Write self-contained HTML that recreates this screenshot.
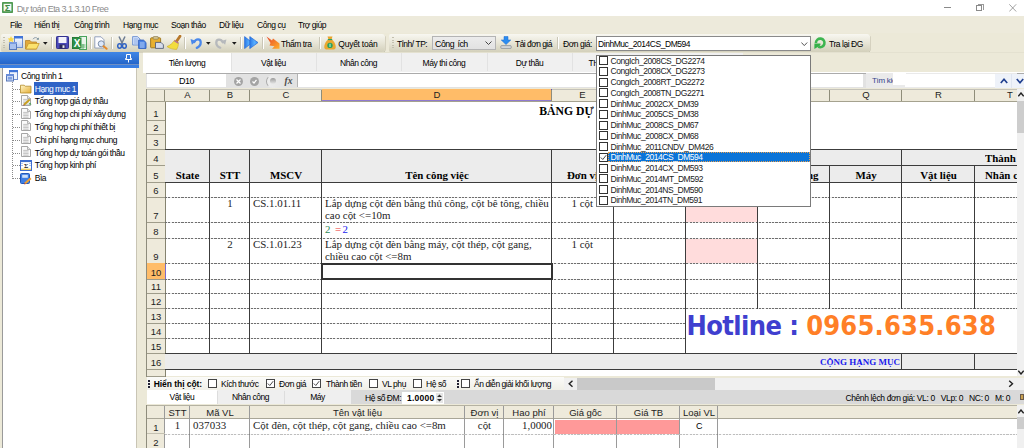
<!DOCTYPE html><html><head><meta charset="utf-8"><title>Dự toán Eta</title><style>
html,body{margin:0;padding:0;}
body{width:1024px;height:448px;overflow:hidden;position:relative;background:#ece9d8;font-family:"Liberation Sans",sans-serif;font-size:8px;color:#000;}
div,span{box-sizing:border-box;}
.a{position:absolute;}
.t{position:absolute;white-space:nowrap;font-size:8.5px;letter-spacing:-0.45px;line-height:10px;}
.s{position:absolute;white-space:nowrap;font-family:"Liberation Serif",serif;font-size:10.9px;line-height:12px;}
.sb{font-weight:bold;}
.ch{position:absolute;text-align:center;font-size:9.5px;line-height:12px;color:#222;}
.rh{position:absolute;text-align:center;font-size:9.5px;color:#222;left:147px;width:18px;}
.vl{position:absolute;width:1px;background:#3c3c3c;}
.hl{position:absolute;height:1px;background:#3c3c3c;}
.dl{position:absolute;height:1px;background:repeating-linear-gradient(90deg,#6e6e6e 0,#6e6e6e 2.1px,#e8e8e8 2.1px,#e8e8e8 3.3px);}
.cb{position:absolute;width:9px;height:9px;border:1px solid #333;background:#fff;}
</style></head><body>
<div class="a" style="left:0;top:0;width:1024px;height:16px;background:#fff"></div>
<svg class="a" style="left:1.8px;top:2.3px" width="11" height="11" viewBox="0 0 11 11"><rect x="0" y="0" width="11" height="11" rx="0.8" fill="#4f9a52"/><path d="M1.6 1.8H9.4V9.2H1.6Z" fill="#f4faf4"/><text x="5.5" y="8.9" font-size="9.5" font-weight="bold" text-anchor="middle" font-family="Liberation Sans,sans-serif" fill="#3f8a45">Σ</text></svg>
<div class="t" style="left:16.8px;top:3.6px;font-size:9.1px;letter-spacing:-0.57px;color:#8c8c8c">Dự toán Eta 3.1.3.10 Free</div>
<div class="a" style="left:944px;top:7px;width:7px;height:1px;background:#8a8a8a"></div>
<div class="a" style="left:976px;top:5px;width:6px;height:6px;border:1px solid #8a8a8a;background:#fff"></div>
<div class="a" style="left:977.5px;top:3.5px;width:6px;height:6px;border-top:1px solid #999;border-right:1px solid #999"></div>
<svg class="a" style="left:1009px;top:3.5px" width="8" height="8"><path d="M0.3 0.3L7.2 7.5M7.2 0.3L0.3 7.5" stroke="#8a8a8a" stroke-width="0.8" fill="none"/></svg>
<div class="a" style="left:0;top:16px;width:1024px;height:17px;background:#edeadb"></div>
<div class="t" style="left:10px;top:20px">File</div>
<div class="t" style="left:34px;top:20px">Hiển thị</div>
<div class="t" style="left:74px;top:20px">Công trình</div>
<div class="t" style="left:123px;top:20px">Hạng mục</div>
<div class="t" style="left:171px;top:20px">Soạn thảo</div>
<div class="t" style="left:219px;top:20px">Dữ liệu</div>
<div class="t" style="left:257px;top:20px">Công cụ</div>
<div class="t" style="left:298px;top:20px">Trợ giúp</div>
<div class="a" style="left:0;top:33px;width:1024px;height:19px;background:#ece9d8"></div>
<div class="a" style="left:1px;top:34px;width:384px;height:18px;border-radius:2px 3px 3px 2px;background:linear-gradient(#f8f7f1,#e9e7d9 45%,#d3d0bb);box-shadow:0.5px 0.5px 0 #bdbaa6"></div>
<div class="a" style="left:389px;top:34px;width:481px;height:18px;border-radius:2px 3px 3px 2px;background:linear-gradient(#f8f7f1,#e9e7d9 45%,#d3d0bb);box-shadow:0.5px 0.5px 0 #bdbaa6"></div>
<div class="a" style="left:3px;top:37px;width:2px;height:11px;background:repeating-linear-gradient(#c2bfae 0,#c2bfae 1.2px,transparent 1.2px,transparent 2.6px)"></div>
<div class="a" style="left:392px;top:37px;width:2px;height:11px;background:repeating-linear-gradient(#c2bfae 0,#c2bfae 1.2px,transparent 1.2px,transparent 2.6px)"></div>
<svg class="a" style="left:8px;top:36px" width="15" height="14" viewBox="0 0 15 14"><defs><linearGradient id="gw" x1="0" y1="0" x2="0" y2="1"><stop offset="0" stop-color="#fff"/><stop offset="1" stop-color="#b9cdf2"/></linearGradient></defs><rect x="6.5" y="0.5" width="8" height="11" fill="url(#gw)" stroke="#6f8fd0"/><rect x="6" y="0" width="9" height="2.5" fill="#3f74d8"/><rect x="1.5" y="6.5" width="7" height="7" fill="#a9c2f0" stroke="#5878b8"/><rect x="1" y="6" width="8" height="2" fill="#7a9ce0"/><path d="M3 0L4 2.3L6.5 2.5L4.6 4L5.2 6.5L3 5.1L0.8 6.5L1.4 4L-0.5 2.5L2 2.3Z" fill="#f8d848"/></svg>
<svg class="a" style="left:25px;top:36px" width="15" height="14" viewBox="0 0 15 14"><path d="M0.5 13V4.5H5L6.5 6H11.5V13Z" fill="#e2a93c" stroke="#b98528" stroke-width="0.8"/><path d="M0.8 13L3.5 7.5H14.2L11.5 13Z" fill="#fbe26e" stroke="#c8992c" stroke-width="0.8"/><path d="M8 3.2C9 1.2 11.5 1 12.8 2.8" stroke="#8a9aa8" stroke-width="0.9" fill="none"/><path d="M11.5 3.6L13.8 3.8L13.6 1.6Z" fill="#5a7a8a"/></svg>
<svg class="a" style="left:43.3px;top:42px" width="4.6" height="2.8" viewBox="0 0 5 3"><path d="M0 0H5L2.5 3Z" fill="#1a1a1a"/></svg>
<div class="a" style="left:51px;top:37px;width:1px;height:12px;background:#c9c6b6"></div><div class="a" style="left:52px;top:37px;width:1px;height:12px;background:#fff"></div>
<svg class="a" style="left:56px;top:36px" width="13" height="13" viewBox="0 0 13 13"><rect x="0.5" y="0.5" width="12" height="12" rx="0.8" fill="#4a49b9" stroke="#33328f"/><rect x="2.5" y="1" width="8" height="6" fill="#f2f2fa"/><rect x="3.5" y="8.5" width="6" height="4" fill="#2a2a5a"/><rect x="6.5" y="9.3" width="2" height="2.6" fill="#e8e8f0"/></svg>
<svg class="a" style="left:72px;top:36px" width="15" height="14" viewBox="0 0 15 14"><rect x="0.5" y="1.5" width="10" height="11" fill="#2f8f45" stroke="#1f6a30"/><rect x="7.5" y="0.5" width="7" height="13" fill="#e9f5ea" stroke="#4aa35c"/><rect x="0.5" y="1.5" width="9" height="11" fill="#2f8f45"/><text x="5" y="10.6" font-size="10" font-weight="bold" text-anchor="middle" font-family="Liberation Sans,sans-serif" fill="#fff">X</text><path d="M8.5 9H13.5M8.5 11H13.5M11 8V13" stroke="#4aa35c" stroke-width="0.8"/></svg>
<div class="a" style="left:90px;top:37px;width:1px;height:12px;background:#c9c6b6"></div><div class="a" style="left:91px;top:37px;width:1px;height:12px;background:#fff"></div>
<svg class="a" style="left:94px;top:36px" width="14" height="14" viewBox="0 0 14 14"><path d="M0.8 0.8H7L10 3.8V12H0.8Z" fill="#fdfdff" stroke="#8b9bb8" stroke-width="0.9"/><circle cx="7.2" cy="7.8" r="3" fill="#dbe8fb" stroke="#7d8ea8" stroke-width="1"/><path d="M9.6 10.2L12.6 12.8" stroke="#e58a2a" stroke-width="2" stroke-linecap="round"/></svg>
<div class="a" style="left:111px;top:37px;width:1px;height:12px;background:#c9c6b6"></div><div class="a" style="left:112px;top:37px;width:1px;height:12px;background:#fff"></div>
<svg class="a" style="left:117px;top:36px" width="10" height="13" viewBox="0 0 10 13"><path d="M2 0.5L5.6 8M8 0.5L4.4 8" stroke="#6d7c93" stroke-width="1.5" fill="none"/><ellipse cx="2.6" cy="10" rx="1.9" ry="2.2" fill="none" stroke="#2f62c4" stroke-width="1.5"/><ellipse cx="7.4" cy="10" rx="1.9" ry="2.2" fill="none" stroke="#2f62c4" stroke-width="1.5"/></svg>
<svg class="a" style="left:132px;top:36px" width="15" height="13" viewBox="0 0 15 13"><path d="M0.6 0.6H5.5L8 3V9H0.6Z" fill="#cfe0fa" stroke="#6d8fd0" stroke-width="0.9"/><path d="M2 3H6M2 5H6M2 7H6" stroke="#7ea0e0" stroke-width="0.8"/><path d="M6.6 4.1H11.5L14 6.5V12.4H6.6Z" fill="#4f86e4" stroke="#2f5fc0" stroke-width="0.9"/><path d="M8 7H12.5M8 9H12.5M8 11H12.5" stroke="#cfe0fa" stroke-width="0.8"/></svg>
<svg class="a" style="left:150px;top:36px" width="14" height="13" viewBox="0 0 14 13"><rect x="0.6" y="1.8" width="10" height="10" rx="0.8" fill="#e8b030" stroke="#9a7420" stroke-width="0.9"/><rect x="3.2" y="0.6" width="5" height="2.6" rx="0.6" fill="#d8c890" stroke="#8a7a50" stroke-width="0.7"/><path d="M5.5 6.4H11L13.4 8.8V12.4H5.5Z" fill="#d5dcec" stroke="#55607a" stroke-width="0.9"/></svg>
<svg class="a" style="left:166px;top:35px" width="16" height="15" viewBox="0 0 16 15"><path d="M14 1.2L10.6 6.2" stroke="#b8792c" stroke-width="2.8" stroke-linecap="round"/><path d="M8.6 5.2L12.4 7.8C12.6 10 11.8 12.6 10.6 14.4C7.5 14.6 3.6 13.4 1 11.6C4 10.4 6.8 8 8.6 5.2Z" fill="#f2dc3e" stroke="#cfae22" stroke-width="0.6"/><path d="M8.4 5.6L12.4 8.2" stroke="#b0689a" stroke-width="1.3"/></svg>
<div class="a" style="left:184px;top:37px;width:1px;height:12px;background:#c9c6b6"></div><div class="a" style="left:185px;top:37px;width:1px;height:12px;background:#fff"></div>
<svg class="a" style="left:189.5px;top:36.5px" width="12" height="12" viewBox="0 0 13 13"><path d="M4.6 5.6C6.2 1.6 11.6 1.4 11.6 6C11.6 8.8 9.6 10.8 7.4 11.8" stroke="#4a88ea" stroke-width="2.5" fill="none" stroke-linecap="round"/><path d="M0.6 2.3L6.6 4.2L2 8.3Z" fill="#4a88ea"/></svg>
<svg class="a" style="left:206.3px;top:42px" width="4.6" height="2.8" viewBox="0 0 5 3"><path d="M0 0H5L2.5 3Z" fill="#1a1a1a"/></svg>
<svg class="a" style="left:214.5px;top:36.5px" width="12" height="12" viewBox="0 0 13 13"><g transform="translate(13,0.4) scale(-1,0.95)"><path d="M4.6 5.6C6.2 1.6 11.6 1.4 11.6 6C11.6 8.8 9.6 10.8 7.4 11.8" stroke="#b6b9bc" stroke-width="2.5" fill="none" stroke-linecap="round"/><path d="M0.6 2.3L6.6 4.2L2 8.3Z" fill="#b6b9bc"/></g></svg>
<svg class="a" style="left:232.3px;top:42px" width="4.6" height="2.8" viewBox="0 0 5 3"><path d="M0 0H5L2.5 3Z" fill="#1a1a1a"/></svg>
<div class="a" style="left:240px;top:37px;width:1px;height:12px;background:#c9c6b6"></div><div class="a" style="left:241px;top:37px;width:1px;height:12px;background:#fff"></div>
<svg class="a" style="left:244px;top:36px" width="15" height="13" viewBox="0 0 15 13"><defs><linearGradient id="gb" x1="0" y1="0" x2="1" y2="0"><stop offset="0" stop-color="#2a78e6"/><stop offset="0.6" stop-color="#58b0ff"/><stop offset="1" stop-color="#2f86f0"/></linearGradient></defs><path d="M0.6 0.6L8 6.6L0.6 12.6Z" fill="url(#gb)" stroke="#2468d8" stroke-width="0.7"/><path d="M5.8 0.6L14 6.6L5.8 12.6Z" fill="url(#gb)" stroke="#2468d8" stroke-width="0.7"/></svg>
<div class="a" style="left:262px;top:37px;width:1px;height:12px;background:#c9c6b6"></div><div class="a" style="left:263px;top:37px;width:1px;height:12px;background:#fff"></div>
<svg class="a" style="left:266px;top:36px" width="14" height="13" viewBox="0 0 14 13"><defs><linearGradient id="go" x1="0" y1="0" x2="1" y2="1"><stop offset="0" stop-color="#e8442a"/><stop offset="1" stop-color="#ffb02a"/></linearGradient></defs><path d="M0.5 0.5L6 4.5L7 2.5L13.5 7.5V12.8H6L8.5 10.2L3.5 9.5L4.5 7Z" fill="url(#go)"/></svg>
<div class="a" style="left:319px;top:37px;width:1px;height:12px;background:#c9c6b6"></div><div class="a" style="left:320px;top:37px;width:1px;height:12px;background:#fff"></div>
<svg class="a" style="left:323px;top:36px" width="14" height="14" viewBox="0 0 14 14"><path d="M4.5 0.5H9.5L8.6 3.2H5.4Z" fill="#e9a52c"/><path d="M5.2 3.6C1 6.5 0 13.5 3 13.5H11C14 13.5 13 6.5 8.8 3.6Z" fill="#eaa830"/><rect x="4.8" y="3" width="4.4" height="1.1" fill="#2f9f5c"/><circle cx="7" cy="9.4" r="2.7" fill="#2aa060"/><path d="M7 7.8V11" stroke="#d8ffe8" stroke-width="0.9"/></svg>
<svg class="a" style="left:500px;top:36px" width="12" height="13" viewBox="0 0 12 13"><path d="M4 0.5H8V4H10.8L6 8.6L1.2 4H4Z" fill="#2b8cf0" stroke="#1a6ad0" stroke-width="0.5"/><rect x="0.8" y="9.6" width="10.4" height="3" rx="0.8" fill="#d0d4d8" stroke="#8a9098" stroke-width="0.8"/></svg>
<div class="a" style="left:557px;top:37px;width:1px;height:12px;background:#c9c6b6"></div><div class="a" style="left:558px;top:37px;width:1px;height:12px;background:#fff"></div>
<svg class="a" style="left:813px;top:36px" width="14" height="14" viewBox="0 0 14 14"><path d="M2.9 6.9A4.3 4.3 0 1 1 5.2 10.7" fill="none" stroke="#3db550" stroke-width="2.6"/><path d="M1.4 7.6H7.4V9.2L1.4 12.9Z" fill="#35b048"/></svg>
<div class="t" style="left:281px;top:38.5px">Thẩm tra</div>
<div class="t" style="left:338.3px;top:38.5px;letter-spacing:-0.25px">Quyết toán</div>
<div class="t" style="left:397px;top:38.5px">Tỉnh/ TP:</div>
<div class="a" style="left:432px;top:36px;width:64px;height:14px;background:linear-gradient(#ececec,#e2e2e2);border:1px solid #b4b4b4"></div>
<div class="t" style="left:435px;top:38.8px;font-size:8.8px;word-spacing:1.2px">Công ích</div>
<svg class="a" style="left:485px;top:41px" width="7" height="5"><path d="M0.5 0.5L3.5 3.5L6.5 0.5" stroke="#444" stroke-width="1" fill="none"/></svg>
<div class="t" style="left:515px;top:38.5px;letter-spacing:-0.55px">Tải đơn giá</div>
<div class="t" style="left:563px;top:38.5px">Đơn giá:</div>
<div class="a" style="left:596px;top:36px;width:215px;height:15px;background:#fff;border:1px solid #8a8a8a"></div>
<div class="t" style="left:598px;top:38.5px">DinhMuc_2014CS_DM594</div>
<svg class="a" style="left:801px;top:41.5px" width="7" height="5"><path d="M0.4 0.5L3.3 3.6L6.2 0.5" stroke="#555" stroke-width="1" fill="none"/></svg>
<div class="t" style="left:829px;top:38.5px">Tra lại ĐG</div>
<div class="a" style="left:0;top:52px;width:139px;height:396px;background:#ece9d8"></div>
<div class="a" style="left:0;top:52px;width:139px;height:12px;background:linear-gradient(#3f86e6,#2566c9)"></div>
<div class="a" style="left:0;top:64px;width:139px;height:4px;background:#3a7fe2"></div><div class="a" style="left:0;top:63.8px;width:139px;height:1px;background:#6f8fc4"></div>
<div class="a" style="left:2px;top:68px;width:135px;height:380px;background:#fff;border-right:1px solid #c9c5b5;border-left:1px solid #9a9a9a"></div>
<svg class="a" style="left:125px;top:54px" width="7" height="9"><path d="M1.5 0.5H5.5V4.5H6.5V5.5H0.5V4.5H1.5Z M3.5 5.5V8.5" stroke="#fff" stroke-width="1" fill="none"/></svg>
<div class="a" style="left:12px;top:82px;width:1px;height:98px;background:repeating-linear-gradient(#8a8a8a 0,#8a8a8a 1px,#fff 1px,#fff 2px)"></div>
<svg class="a" style="left:6px;top:70px" width="12" height="12" viewBox="0 0 12 12"><rect x="3.5" y="0.5" width="8" height="9" fill="#eef3fc" stroke="#6f8fd0"/><rect x="3" y="0" width="9" height="2.2" fill="#3f74d8"/><rect x="0.5" y="4.5" width="7" height="6.5" fill="#c6d6f4" stroke="#5878b8"/><rect x="0" y="4" width="8" height="2" fill="#6a8ed8"/><rect x="2" y="7" width="4" height="2.5" fill="#7fa0e0"/></svg>
<div class="t" style="left:21px;top:70.5px">Công trình 1</div>
<div class="a" style="left:13px;top:88.5px;width:7px;height:1px;background:repeating-linear-gradient(90deg,#8a8a8a 0,#8a8a8a 1px,#fff 1px,#fff 2px)"></div>
<div class="a" style="left:34px;top:82.0px;width:44px;height:13px;background:#2f63c6"></div>
<div class="t" style="left:34.7px;top:83.5px;color:#fff">Hạng mục 1</div>
<svg class="a" style="left:20px;top:83.5px" width="12" height="10" viewBox="0 0 12 10"><defs><linearGradient id="gf" x1="0" y1="0" x2="1" y2="1"><stop offset="0" stop-color="#fff6c8"/><stop offset="1" stop-color="#e4ae38"/></linearGradient></defs><path d="M0.5 9V1.2H4.2L5.2 2.2H11V9Z" fill="url(#gf)" stroke="#b48c2a" stroke-width="0.8"/></svg>
<div class="a" style="left:13px;top:101.3px;width:7px;height:1px;background:repeating-linear-gradient(90deg,#8a8a8a 0,#8a8a8a 1px,#fff 1px,#fff 2px)"></div>
<div class="t" style="left:34.7px;top:96.3px">Tổng hợp giá dự thầu</div>
<svg class="a" style="left:21px;top:94.8px" width="11" height="12" viewBox="0 0 11 12"><path d="M0.5 0.5H6.5L9.5 3.5V10.5H0.5Z" fill="#fafafa" stroke="#9c9c9c" stroke-width="0.9"/><path d="M6.5 0.5V3.5H9.5" fill="#e4e4e4" stroke="#9c9c9c" stroke-width="0.7"/><path d="M2.2 4.4H7.6M2.2 6H7.6M2.2 7.6H7.6M2.2 9.2H7.6" stroke="#b4b4b4" stroke-width="0.8"/><path d="M3 9.8L8.8 4.6" stroke="#c8a020" stroke-width="2"/><path d="M7.5 9.5L10.5 9.5L9 7.5Z" fill="#3f9f4f"/><path d="M2.2 10.8L3.8 10.3L2.8 9.2Z" fill="#a04040"/></svg>
<div class="a" style="left:13px;top:114.1px;width:7px;height:1px;background:repeating-linear-gradient(90deg,#8a8a8a 0,#8a8a8a 1px,#fff 1px,#fff 2px)"></div>
<div class="t" style="left:34.7px;top:109.1px">Tổng hợp chi phí xây dựng</div>
<svg class="a" style="left:21px;top:107.6px" width="10" height="11" viewBox="0 0 10 11"><path d="M0.5 0.5H6.5L9.5 3.5V10.5H0.5Z" fill="#fafafa" stroke="#9c9c9c" stroke-width="0.9"/><path d="M6.5 0.5V3.5H9.5" fill="#e4e4e4" stroke="#9c9c9c" stroke-width="0.7"/><path d="M2.2 4.4H7.6M2.2 6H7.6M2.2 7.6H7.6M2.2 9.2H7.6" stroke="#b4b4b4" stroke-width="0.8"/></svg>
<div class="a" style="left:13px;top:126.9px;width:7px;height:1px;background:repeating-linear-gradient(90deg,#8a8a8a 0,#8a8a8a 1px,#fff 1px,#fff 2px)"></div>
<div class="t" style="left:34.7px;top:121.9px">Tổng hợp chi phí thiết bị</div>
<svg class="a" style="left:21px;top:120.4px" width="10" height="11" viewBox="0 0 10 11"><path d="M0.5 0.5H6.5L9.5 3.5V10.5H0.5Z" fill="#fafafa" stroke="#9c9c9c" stroke-width="0.9"/><path d="M6.5 0.5V3.5H9.5" fill="#e4e4e4" stroke="#9c9c9c" stroke-width="0.7"/><path d="M2.2 4.4H7.6M2.2 6H7.6M2.2 7.6H7.6M2.2 9.2H7.6" stroke="#b4b4b4" stroke-width="0.8"/></svg>
<div class="a" style="left:13px;top:139.7px;width:7px;height:1px;background:repeating-linear-gradient(90deg,#8a8a8a 0,#8a8a8a 1px,#fff 1px,#fff 2px)"></div>
<div class="t" style="left:34.7px;top:134.7px">Chi phí hạng mục chung</div>
<svg class="a" style="left:21px;top:133.2px" width="10" height="11" viewBox="0 0 10 11"><path d="M0.5 0.5H6.5L9.5 3.5V10.5H0.5Z" fill="#fafafa" stroke="#9c9c9c" stroke-width="0.9"/><path d="M6.5 0.5V3.5H9.5" fill="#e4e4e4" stroke="#9c9c9c" stroke-width="0.7"/><path d="M2.2 4.4H7.6M2.2 6H7.6M2.2 7.6H7.6M2.2 9.2H7.6" stroke="#b4b4b4" stroke-width="0.8"/></svg>
<div class="a" style="left:13px;top:152.5px;width:7px;height:1px;background:repeating-linear-gradient(90deg,#8a8a8a 0,#8a8a8a 1px,#fff 1px,#fff 2px)"></div>
<div class="t" style="left:34.7px;top:147.5px">Tổng hợp dự toán gói thầu</div>
<svg class="a" style="left:21px;top:146.0px" width="10" height="11" viewBox="0 0 10 11"><path d="M0.5 0.5H6.5L9.5 3.5V10.5H0.5Z" fill="#fafafa" stroke="#9c9c9c" stroke-width="0.9"/><path d="M6.5 0.5V3.5H9.5" fill="#e4e4e4" stroke="#9c9c9c" stroke-width="0.7"/><path d="M2.2 4.4H7.6M2.2 6H7.6M2.2 7.6H7.6M2.2 9.2H7.6" stroke="#b4b4b4" stroke-width="0.8"/></svg>
<div class="a" style="left:13px;top:165.3px;width:7px;height:1px;background:repeating-linear-gradient(90deg,#8a8a8a 0,#8a8a8a 1px,#fff 1px,#fff 2px)"></div>
<div class="t" style="left:34.7px;top:160.3px">Tổng hợp kinh phí</div>
<svg class="a" style="left:20px;top:159.8px" width="12" height="11" viewBox="0 0 12 11"><rect x="0.5" y="0.5" width="11" height="10" fill="#fff" stroke="#3f6fd0"/><rect x="0.5" y="0.5" width="11" height="1.6" fill="#3f6fd0"/><rect x="1" y="8.6" width="10" height="1.4" fill="#f0d060"/><path d="M1 3.5H3M1 5.5H3M9 3.5H11M9 5.5H11" stroke="#9ab4e8" stroke-width="0.8"/><text x="6" y="7.6" font-size="6.5" font-weight="bold" text-anchor="middle" font-family="Liberation Serif,serif" fill="#222">Σ</text></svg>
<div class="a" style="left:13px;top:178.10000000000002px;width:7px;height:1px;background:repeating-linear-gradient(90deg,#8a8a8a 0,#8a8a8a 1px,#fff 1px,#fff 2px)"></div>
<div class="t" style="left:34.7px;top:173.10000000000002px">Bìa</div>
<svg class="a" style="left:20px;top:172.60000000000002px" width="12" height="12" viewBox="0 0 12 12"><rect x="0.5" y="0.5" width="9" height="10" rx="1" fill="#3f7fe4" stroke="#2458b8"/><rect x="2.2" y="1.8" width="5.6" height="3" fill="#cfe0fa"/><path d="M5 10.5L10.8 5.2" stroke="#f0a030" stroke-width="2"/><path d="M4.2 11.4L5.8 10.9L4.7 9.8Z" fill="#c04040"/></svg>
<div class="a" style="left:143px;top:52px;width:881px;height:1px;background:#e4e1d0"></div><div class="a" style="left:143px;top:53px;width:600px;height:18.5px;background:#f0f0f0"></div><div class="a" style="left:146px;top:71.5px;width:878px;height:2px;background:#fff"></div>
<div class="a" style="left:143px;top:53px;width:88px;height:20px;background:#fff"></div>
<div class="t" style="left:143px;width:88px;top:57.8px;text-align:center">Tiên lượng</div>
<div class="t" style="left:231px;width:85px;top:57.8px;text-align:center">Vật liệu</div>
<div class="a" style="left:231px;top:53px;width:1px;height:18px;background:#e2e2e2"></div>
<div class="t" style="left:316px;width:85px;top:57.8px;text-align:center">Nhân công</div>
<div class="a" style="left:316px;top:53px;width:1px;height:18px;background:#e2e2e2"></div>
<div class="t" style="left:401px;width:86px;top:57.8px;text-align:center">Máy thi công</div>
<div class="a" style="left:401px;top:53px;width:1px;height:18px;background:#e2e2e2"></div>
<div class="t" style="left:487px;width:85px;top:57.8px;text-align:center">Dự thầu</div>
<div class="a" style="left:487px;top:53px;width:1px;height:18px;background:#e2e2e2"></div>
<div class="t" style="left:588.5px;top:57.8px">TH dự thầu</div>
<div class="a" style="left:572px;top:53px;width:1px;height:18px;background:#e2e2e2"></div>
<div class="a" style="left:146px;top:73px;width:878px;height:15px;background:#e2e2e2;border-top:1px solid #ababab"></div>
<div class="a" style="left:147px;top:74px;width:79px;height:13.3px;background:#fff"></div>
<div class="t" style="left:147px;width:79px;top:76px;text-align:center;font-size:9px">D10</div>
<div class="a" style="left:233.5px;top:76.5px;width:9px;height:9px;border-radius:4.5px;background:#a4a4a4"></div>
<div class="a" style="left:250px;top:76.5px;width:9px;height:9px;border-radius:4.5px;background:#a4a4a4"></div>
<svg class="a" style="left:235.5px;top:78.5px" width="5" height="5"><path d="M0.5 0.5L4.5 4.5M4.5 0.5L0.5 4.5" stroke="#fff" stroke-width="1.2"/></svg>
<svg class="a" style="left:252px;top:78.5px" width="5" height="5"><path d="M0.5 2.5L2 4L4.5 0.8" stroke="#fff" stroke-width="1.2" fill="none"/></svg>
<div class="a" style="left:266px;top:74.5px;width:22px;height:13px;border-radius:6.5px 0 0 6.5px;border:1px solid #a8a8a8;border-right:none;border-top-color:transparent;border-bottom-color:transparent;background:linear-gradient(90deg,#ededed,#e2e2e2)"></div>
<div class="a" style="left:270px;top:78px;width:6px;height:6px;border-radius:3px;background:linear-gradient(#9a9a9a,#e8e8e8)"></div>
<div class="s" style="left:284.5px;top:74.5px;font-style:italic;font-weight:bold;font-size:9.5px;color:#4a4a4a">fx</div>
<div class="a" style="left:297px;top:74px;width:566px;height:13.3px;background:#fff;border-left:1px solid #b4b4b4"></div>
<div class="a" style="left:866px;top:73px;width:151px;height:15px;background:#eaeaea"></div>
<div class="t" style="left:872px;top:76px;font-size:8px;letter-spacing:-0.3px;color:#34448a">Tìm kiếm</div>
<div class="a" style="left:893px;top:72.5px;width:13px;height:12px;background:#fff"></div><div class="a" style="left:905px;top:74px;width:90px;height:13px;background:#fff"></div>
<div class="a" style="left:995px;top:74px;width:29px;height:14px;background:#eef2f9"></div><div class="a" style="left:1011px;top:74px;width:1px;height:14px;background:#dfe5f0"></div>
<svg class="a" style="left:999.5px;top:77.5px" width="8" height="6"><path d="M0.8 5L4 1.3L7.2 5" stroke="#1f3f8f" stroke-width="1.7" fill="none"/></svg>
<svg class="a" style="left:1015.5px;top:77.5px" width="8" height="6"><path d="M0.8 1L4 4.7L7.2 1" stroke="#1f3f8f" stroke-width="1.7" fill="none"/></svg>
<div class="a" style="left:147px;top:89px;width:870px;height:287px;background:#fff"></div>
<div class="a" style="left:147px;top:89px;width:870px;height:13px;background:#eeeadb;border-bottom:1px solid #a5a28f;border-top:1px solid #c4c2b8"></div>
<div class="a" style="left:322px;top:89px;width:230px;height:12px;background:#ffbc68;border-bottom:1px solid #8f7ad0;border-right:1px solid #5a50c0"></div>
<div class="a" style="left:164px;top:90px;width:1px;height:11px;background:#8f8d7a"></div>
<div class="ch" style="left:165px;width:45px;top:89.2px">A</div>
<div class="a" style="left:209px;top:90px;width:1px;height:11px;background:#8f8d7a"></div>
<div class="ch" style="left:210px;width:40px;top:89.2px">B</div>
<div class="a" style="left:249px;top:90px;width:1px;height:11px;background:#8f8d7a"></div>
<div class="ch" style="left:250px;width:72px;top:89.2px">C</div>
<div class="a" style="left:321px;top:90px;width:1px;height:11px;background:#8f8d7a"></div>
<div class="ch" style="left:322px;width:230px;top:89.2px">D</div>
<div class="a" style="left:551px;top:90px;width:1px;height:11px;background:#8f8d7a"></div>
<div class="ch" style="left:552px;width:61px;top:89.2px">E</div>
<div class="a" style="left:612px;top:90px;width:1px;height:11px;background:#8f8d7a"></div>
<div class="ch" style="left:613px;width:72px;top:89.2px">F</div>
<div class="a" style="left:684px;top:90px;width:1px;height:11px;background:#8f8d7a"></div>
<div class="ch" style="left:685px;width:72px;top:89.2px">G</div>
<div class="a" style="left:756px;top:90px;width:1px;height:11px;background:#8f8d7a"></div>
<div class="ch" style="left:757px;width:73px;top:89.2px">H</div>
<div class="a" style="left:829px;top:90px;width:1px;height:11px;background:#8f8d7a"></div>
<div class="ch" style="left:830px;width:72px;top:89.2px">Q</div>
<div class="a" style="left:901px;top:90px;width:1px;height:11px;background:#8f8d7a"></div>
<div class="ch" style="left:902px;width:73px;top:89.2px">R</div>
<div class="a" style="left:974px;top:90px;width:1px;height:11px;background:#8f8d7a"></div>
<div class="ch" style="left:975px;width:70px;top:89.2px">T</div>
<div class="a" style="left:1017px;top:90px;width:1px;height:11px;background:#8f8d7a"></div>
<div class="a" style="left:147px;top:102px;width:19px;height:275px;background:#eeeadb;border-right:1px solid #85836f"></div>
<div class="a" style="left:146px;top:89px;width:1px;height:288px;background:#8e8c7c"></div>
<div class="a" style="left:147px;top:120px;width:18px;height:1px;background:#9f9c8a"></div>
<div class="rh" style="top:108px;line-height:11px">1</div>
<div class="a" style="left:147px;top:134px;width:18px;height:1px;background:#9f9c8a"></div>
<div class="rh" style="top:122px;line-height:11px">2</div>
<div class="a" style="left:147px;top:149px;width:18px;height:1px;background:#9f9c8a"></div>
<div class="rh" style="top:137px;line-height:11px">3</div>
<div class="a" style="left:147px;top:165px;width:18px;height:1px;background:#9f9c8a"></div>
<div class="rh" style="top:153px;line-height:11px">4</div>
<div class="a" style="left:147px;top:182px;width:18px;height:1px;background:#9f9c8a"></div>
<div class="rh" style="top:170px;line-height:11px">5</div>
<div class="a" style="left:147px;top:197px;width:18px;height:1px;background:#9f9c8a"></div>
<div class="rh" style="top:185px;line-height:11px">6</div>
<div class="a" style="left:147px;top:222px;width:18px;height:1px;background:#9f9c8a"></div>
<div class="rh" style="top:210px;line-height:11px">7</div>
<div class="a" style="left:147px;top:238px;width:18px;height:1px;background:#9f9c8a"></div>
<div class="rh" style="top:226px;line-height:11px">8</div>
<div class="a" style="left:147px;top:263px;width:18px;height:1px;background:#9f9c8a"></div>
<div class="rh" style="top:251px;line-height:11px">9</div>
<div class="a" style="left:147px;top:263px;width:19px;height:16px;background:#ffbc68;border-right:1px solid #7a6ad0"></div>
<div class="a" style="left:147px;top:279px;width:18px;height:1px;background:#9f9c8a"></div>
<div class="rh" style="top:267px;line-height:11px">10</div>
<div class="a" style="left:147px;top:293px;width:18px;height:1px;background:#9f9c8a"></div>
<div class="rh" style="top:281px;line-height:11px">11</div>
<div class="a" style="left:147px;top:308px;width:18px;height:1px;background:#9f9c8a"></div>
<div class="rh" style="top:296px;line-height:11px">12</div>
<div class="a" style="left:147px;top:323px;width:18px;height:1px;background:#9f9c8a"></div>
<div class="rh" style="top:311px;line-height:11px">13</div>
<div class="a" style="left:147px;top:338px;width:18px;height:1px;background:#9f9c8a"></div>
<div class="rh" style="top:326px;line-height:11px">14</div>
<div class="a" style="left:147px;top:353px;width:18px;height:1px;background:#9f9c8a"></div>
<div class="rh" style="top:341px;line-height:11px">15</div>
<div class="a" style="left:147px;top:369px;width:18px;height:1px;background:#9f9c8a"></div>
<div class="rh" style="top:357px;line-height:11px">16</div>
<div class="a" style="left:147px;top:376px;width:18px;height:1px;background:#9f9c8a"></div>
<div class="a" style="left:165px;top:149px;width:852px;height:33px;background:#ececec"></div>
<div class="a" style="left:165px;top:353px;width:852px;height:16px;background:#ececec"></div>
<div class="a" style="left:686px;top:197px;width:71px;height:25px;background:#ffdcdc"></div>
<div class="a" style="left:686px;top:238px;width:71px;height:25px;background:#ffdcdc"></div>
<div class="dl" style="left:165px;top:197px;width:852px"></div>
<div class="dl" style="left:165px;top:222px;width:852px"></div>
<div class="dl" style="left:165px;top:238px;width:852px"></div>
<div class="dl" style="left:165px;top:263px;width:852px"></div>
<div class="dl" style="left:165px;top:279px;width:852px"></div>
<div class="dl" style="left:165px;top:293px;width:852px"></div>
<div class="dl" style="left:165px;top:308px;width:852px"></div>
<div class="dl" style="left:165px;top:323px;width:852px"></div>
<div class="dl" style="left:165px;top:338px;width:852px"></div>
<div class="hl" style="left:165px;top:149px;width:852px"></div>
<div class="hl" style="left:165px;top:182px;width:852px"></div>
<div class="hl" style="left:165px;top:353px;width:852px"></div>
<div class="hl" style="left:165px;top:369px;width:852px"></div>
<div class="hl" style="left:613px;top:165px;width:404px"></div>
<div class="vl" style="left:209px;top:149px;height:204px"></div>
<div class="vl" style="left:249px;top:149px;height:204px"></div>
<div class="vl" style="left:321px;top:149px;height:204px"></div>
<div class="vl" style="left:551px;top:149px;height:204px"></div>
<div class="vl" style="left:612.5px;top:149px;height:204px"></div>
<div class="vl" style="left:684.5px;top:149px;height:204px"></div>
<div class="vl" style="left:756.5px;top:165px;height:188px"></div>
<div class="vl" style="left:829px;top:165px;height:188px"></div>
<div class="vl" style="left:974px;top:165px;height:188px"></div>
<div class="vl" style="left:901px;top:149px;height:220px"></div>
<div class="vl" style="left:974px;top:353px;height:16px"></div>
<div class="s sb" style="left:165px;width:45px;top:169px;text-align:center">State</div>
<div class="s sb" style="left:210px;width:40px;top:169px;text-align:center">STT</div>
<div class="s sb" style="left:250px;width:72px;top:169px;text-align:center">MSCV</div>
<div class="s sb" style="left:322px;width:230px;top:169px;text-align:center">Tên công việc</div>
<div class="s sb" style="left:552px;width:61px;top:169px;text-align:center">Đơn vị</div>
<div class="s sb" style="left:613px;width:72px;top:169px;text-align:center">Khối lượng</div>
<div class="s sb" style="left:685px;width:145px;top:152px;text-align:center">Đơn giá</div>
<div class="s sb" style="left:685px;width:72px;top:169px;text-align:center">Vật liệu</div>
<div class="s sb" style="left:757px;width:73px;top:169px;text-align:center">Nhân công</div>
<div class="s sb" style="left:830px;width:72px;top:169px;text-align:center">Máy</div>
<div class="s sb" style="left:902px;width:73px;top:169px;text-align:center">Vật liệu</div>
<div class="s sb" style="left:975px;top:169px;width:42px;overflow:hidden;text-indent:10px">Nhân công</div>
<div class="s sb" style="left:985px;top:152px;width:32px;overflow:hidden">Thành tiền</div>
<div class="s sb" style="left:539.3px;top:101.8px;font-size:11.7px;line-height:20px;width:477px;overflow:hidden">BẢNG DỰ TOÁN HẠNG MỤC CÔNG TRÌNH</div>
<div class="s" style="left:210px;width:40px;top:197.3px;text-align:center;color:#222">1</div>
<div class="s" style="left:253px;top:197.3px;color:#222">CS.1.01.11</div>
<div class="s" style="left:325px;top:197.3px;color:#222">Lắp dựng cột đèn bằng thủ công, cột bê tông, chiều</div>
<div class="s" style="left:325px;top:209.3px;color:#222">cao cột &lt;=10m</div>
<div class="s" style="left:571.5px;top:197.3px;color:#222">1 cột</div>
<div class="s" style="left:325px;top:223.3px"><span style="color:#2e8b57">2</span>&nbsp;<span style="color:#e33;margin-left:1.8px">=</span><span style="color:#22e;margin-left:1.3px">2</span></div>
<div class="s" style="left:210px;width:40px;top:238.3px;text-align:center;color:#222">2</div>
<div class="s" style="left:253px;top:238.3px;color:#222">CS.1.01.23</div>
<div class="s" style="left:325px;top:238.3px;color:#222">Lắp dựng cột đèn bằng máy, cột thép, cột gang,</div>
<div class="s" style="left:325px;top:250.3px;color:#222">chiều cao cột &lt;=8m</div>
<div class="s" style="left:571.5px;top:238.3px;color:#222">1 cột</div>
<div class="a" style="left:321px;top:263px;width:232px;height:17px;border:2px solid #333;background:#fff"></div>
<div class="s sb" style="left:700px;width:200px;top:356px;text-align:right;color:#1a1aee;font-size:9px">CỘNG HẠNG MỤC</div>
<div class="a" style="left:685.5px;top:309px;width:331.5px;height:44px;background:#fff"></div>
<div class="a" style="left:686.5px;top:308.5px;white-space:nowrap;font-family:'DejaVu Sans Condensed','DejaVu Sans','Liberation Sans',sans-serif;font-weight:bold;font-size:27px;line-height:34px"><span style="color:#3f3fcf;letter-spacing:-0.6px">Hotline : </span><span style="color:#ff7f27;letter-spacing:0.2px">0965.635.638</span></div>
<div class="a" style="left:1017px;top:89px;width:7px;height:287px;background:#f0f0f0"></div>
<div class="a" style="left:1017px;top:101px;width:7px;height:32px;background:#cdcdcd"></div>
<svg class="a" style="left:1018px;top:92px" width="6" height="5"><path d="M0.3 4.2L3 1L5.7 4.2" stroke="#222" stroke-width="1.4" fill="none"/></svg>
<svg class="a" style="left:1018px;top:369.5px" width="6" height="5"><path d="M0.3 0.8L3 4L5.7 0.8" stroke="#222" stroke-width="1.4" fill="none"/></svg>
<div class="a" style="left:596px;top:54.5px;width:215px;height:152px;background:#fff;border:1px solid #7a7a7a"></div>
<div class="cb" style="left:599px;top:56.1px"></div>
<div class="t" style="left:610.5px;top:55.6px;color:#222">CongIch_2008CS_DG2274</div>
<div class="cb" style="left:599px;top:66.85px"></div>
<div class="t" style="left:610.5px;top:66.35px;color:#222">CongIch_2008CX_DG2273</div>
<div class="cb" style="left:599px;top:77.6px"></div>
<div class="t" style="left:610.5px;top:77.1px;color:#222">CongIch_2008RT_DG2272</div>
<div class="cb" style="left:599px;top:88.35px"></div>
<div class="t" style="left:610.5px;top:87.85px;color:#222">CongIch_2008TN_DG2271</div>
<div class="cb" style="left:599px;top:99.1px"></div>
<div class="t" style="left:610.5px;top:98.6px;color:#222">DinhMuc_2002CX_DM39</div>
<div class="cb" style="left:599px;top:109.85px"></div>
<div class="t" style="left:610.5px;top:109.35px;color:#222">DinhMuc_2005CS_DM38</div>
<div class="cb" style="left:599px;top:120.6px"></div>
<div class="t" style="left:610.5px;top:120.1px;color:#222">DinhMuc_2008CS_DM67</div>
<div class="cb" style="left:599px;top:131.35px"></div>
<div class="t" style="left:610.5px;top:130.85px;color:#222">DinhMuc_2008CX_DM68</div>
<div class="cb" style="left:599px;top:142.1px"></div>
<div class="t" style="left:610.5px;top:141.6px;color:#222">DinhMuc_2011CNDV_DM426</div>
<div class="a" style="left:608px;top:151.85px;width:202px;height:10.5px;background:#0a74d8;outline:1px dotted #e8a050;outline-offset:-1px"></div>
<div class="cb" style="left:599px;top:152.85px"></div>
<svg class="a" style="left:600px;top:153.85px" width="7" height="7"><path d="M0.8 3.5L2.8 5.5L6.2 1.2" stroke="#333" stroke-width="0.9" fill="none"/></svg>
<div class="t" style="left:610.5px;top:152.35px;color:#fff">DinhMuc_2014CS_DM594</div>
<div class="cb" style="left:599px;top:163.6px"></div>
<div class="t" style="left:610.5px;top:163.1px;color:#222">DinhMuc_2014CX_DM593</div>
<div class="cb" style="left:599px;top:174.35px"></div>
<div class="t" style="left:610.5px;top:173.85px;color:#222">DinhMuc_2014MT_DM592</div>
<div class="cb" style="left:599px;top:185.1px"></div>
<div class="t" style="left:610.5px;top:184.6px;color:#222">DinhMuc_2014NS_DM590</div>
<div class="cb" style="left:599px;top:195.85px"></div>
<div class="t" style="left:610.5px;top:195.35px;color:#222">DinhMuc_2014TN_DM591</div>
<div class="a" style="left:146.5px;top:377.5px;width:878px;height:13px;background:#f0f0f0"></div>
<div class="a" style="left:146.5px;top:377px;width:417.5px;height:13px;background:linear-gradient(#fbfbf9,#f0efe7)"></div>
<div class="a" style="left:148px;top:379.5px;width:1.5px;height:8px;background:repeating-linear-gradient(#223 0,#223 1.6px,transparent 1.6px,transparent 3px)"></div>
<div class="t" style="left:153.7px;top:378.5px;font-weight:bold;letter-spacing:-0.05px">Hiển thị cột:</div>
<div class="cb" style="left:208px;top:378.7px;border-color:#444"></div>
<div class="t" style="left:221px;top:378.5px">Kích thước</div>
<div class="cb" style="left:266px;top:378.7px;border-color:#444"></div>
<svg class="a" style="left:267.3px;top:380px" width="7" height="7"><path d="M0.8 3.5L2.8 5.5L6.2 1.2" stroke="#333" stroke-width="0.9" fill="none"/></svg>
<div class="t" style="left:279px;top:378.5px">Đơn giá</div>
<div class="cb" style="left:312px;top:378.7px;border-color:#444"></div>
<svg class="a" style="left:313.3px;top:380px" width="7" height="7"><path d="M0.8 3.5L2.8 5.5L6.2 1.2" stroke="#333" stroke-width="0.9" fill="none"/></svg>
<div class="t" style="left:326px;top:378.5px">Thành tiền</div>
<div class="cb" style="left:369px;top:378.7px;border-color:#444"></div>
<div class="t" style="left:382px;top:378.5px">VL phụ</div>
<div class="cb" style="left:413px;top:378.7px;border-color:#444"></div>
<div class="t" style="left:426px;top:378.5px">Hệ số</div>
<div class="cb" style="left:461px;top:378.7px;border-color:#444"></div>
<div class="t" style="left:474px;top:378.5px">Ẩn diễn giải khối lượng</div>
<div class="a" style="left:457px;top:379.5px;width:1.5px;height:8px;background:repeating-linear-gradient(#223 0,#223 1.6px,transparent 1.6px,transparent 3px)"></div>
<svg class="a" style="left:568px;top:380px" width="6" height="8"><path d="M4.5 0.8L1.2 3.8L4.5 6.8" stroke="#222" stroke-width="1.4" fill="none"/></svg>
<div class="a" style="left:577px;top:378px;width:138px;height:11.5px;background:#c9c9c9"></div>
<svg class="a" style="left:1008px;top:380px" width="6" height="8"><path d="M1.2 0.8L4.5 3.8L1.2 6.8" stroke="#222" stroke-width="1.4" fill="none"/></svg>
<div class="a" style="left:146.5px;top:390.3px;width:878px;height:14.2px;background:#d9d9d9"></div>
<div class="a" style="left:146.5px;top:390.3px;width:204.5px;height:14.2px;background:#efefef"></div>
<div class="a" style="left:146.5px;top:390.3px;width:70px;height:14.2px;background:#fff"></div>
<div class="t" style="left:147px;width:70px;top:392.3px;text-align:center">Vật liệu</div>
<div class="t" style="left:217px;width:67px;top:392.3px;text-align:center">Nhân công</div>
<div class="t" style="left:284px;width:67px;top:392.3px;text-align:center">Máy</div>
<div class="a" style="left:216.5px;top:391px;width:1px;height:13px;background:#ddd"></div><div class="a" style="left:284px;top:391px;width:1px;height:13px;background:#ddd"></div>
<div class="t" style="left:365px;top:392.5px">Hệ số ĐM:</div>
<div class="a" style="left:402px;top:392px;width:42px;height:11.5px;background:#fff"></div>
<div class="t" style="left:407px;top:392.5px;font-weight:bold;letter-spacing:0.25px">1.0000</div>
<div class="a" style="left:435.5px;top:393px;width:7.5px;height:9.5px;background:#e6e6e6"></div>
<svg class="a" style="left:437px;top:394px" width="5" height="8"><path d="M0 3L2.5 0.5L5 3Z M0 5L2.5 7.5L5 5Z" fill="#333"/></svg>
<div class="t" style="left:700px;width:310px;top:392.5px;text-align:right;letter-spacing:-0.37px">Chênh lệch đơn giá: VL: 0&nbsp;&nbsp; VLp: 0&nbsp;&nbsp; NC: 0&nbsp;&nbsp; M: 0</div>
<div class="a" style="left:1020px;top:394px;width:4px;height:6px;background:#c8a050;border:1px solid #6a5a4a"></div>
<div class="a" style="left:147px;top:405px;width:870px;height:43px;background:#fff"></div>
<div class="a" style="left:147px;top:405px;width:870px;height:14px;background:#eeeadb;border-bottom:1px solid #a9a697;border-top:1px solid #b5b2a2"></div>
<div class="a" style="left:147px;top:419px;width:18px;height:29px;background:#eeeadb;border-right:1px solid #a9a697"></div>
<div class="a" style="left:146px;top:405px;width:1px;height:43px;background:#8e8c7c"></div>
<div class="a" style="left:164px;top:406px;width:1px;height:42px;background:#9a9a9a"></div>
<div class="ch" style="left:165px;width:25px;top:406.7px;font-size:9.5px">STT</div>
<div class="a" style="left:189px;top:406px;width:1px;height:42px;background:#9a9a9a"></div>
<div class="ch" style="left:190px;width:60px;top:406.7px;font-size:9.5px">Mã VL</div>
<div class="a" style="left:249px;top:406px;width:1px;height:42px;background:#9a9a9a"></div>
<div class="ch" style="left:250px;width:215px;top:406.7px;font-size:9.5px">Tên vật liệu</div>
<div class="a" style="left:464px;top:406px;width:1px;height:42px;background:#9a9a9a"></div>
<div class="ch" style="left:465px;width:39px;top:406.7px;font-size:9.5px">Đơn vị</div>
<div class="a" style="left:503px;top:406px;width:1px;height:42px;background:#9a9a9a"></div>
<div class="ch" style="left:504px;width:50px;top:406.7px;font-size:9.5px">Hao phí</div>
<div class="a" style="left:553px;top:406px;width:1px;height:42px;background:#9a9a9a"></div>
<div class="ch" style="left:554px;width:63px;top:406.7px;font-size:9.5px">Giá gốc</div>
<div class="a" style="left:616px;top:406px;width:1px;height:42px;background:#9a9a9a"></div>
<div class="ch" style="left:617px;width:63px;top:406.7px;font-size:9.5px">Giá TB</div>
<div class="a" style="left:679px;top:406px;width:1px;height:42px;background:#9a9a9a"></div>
<div class="ch" style="left:680px;width:38px;top:406.7px;font-size:9.5px">Loại VL</div>
<div class="a" style="left:717px;top:406px;width:1px;height:42px;background:#9a9a9a"></div>
<div class="a" style="left:554.5px;top:419.5px;width:124.5px;height:14px;background:#ff9999"></div>
<div class="a" style="left:616px;top:419px;width:1px;height:15px;background:#9a9a9a"></div>
<div class="dl" style="left:165px;top:433.6px;width:852px;opacity:0.45"></div>
<div class="a" style="left:147px;top:433px;width:18px;height:1px;background:#c4c1b1"></div>
<div class="rh" style="top:421.5px;line-height:11px">1</div><div class="rh" style="top:436.5px;line-height:11px">2</div>
<div class="s" style="left:165px;width:25px;top:419.3px;text-align:center;color:#222">1</div>
<div class="s" style="left:193px;top:419.3px;color:#222;letter-spacing:0.1px">037033</div>
<div class="s" style="left:253px;top:419.3px;color:#222">Cột đèn, cột thép, cột gang, chiều cao &lt;=8m</div>
<div class="s" style="left:465px;width:39px;top:419.3px;text-align:center;color:#222">cột</div>
<div class="s" style="left:504px;width:48px;top:419.3px;text-align:right;color:#222">1,0000</div>
<div class="t" style="left:680px;width:38px;top:421px;text-align:center;font-size:9px">C</div>
<div class="a" style="left:1017px;top:405px;width:7px;height:43px;background:#f0f0f0"></div>
<div class="a" style="left:1017px;top:417px;width:7px;height:12px;background:#cdcdcd"></div>
<svg class="a" style="left:1018px;top:408.5px" width="6" height="5"><path d="M0.3 4.2L3 1L5.7 4.2" stroke="#222" stroke-width="1.4" fill="none"/></svg>
</body></html>
